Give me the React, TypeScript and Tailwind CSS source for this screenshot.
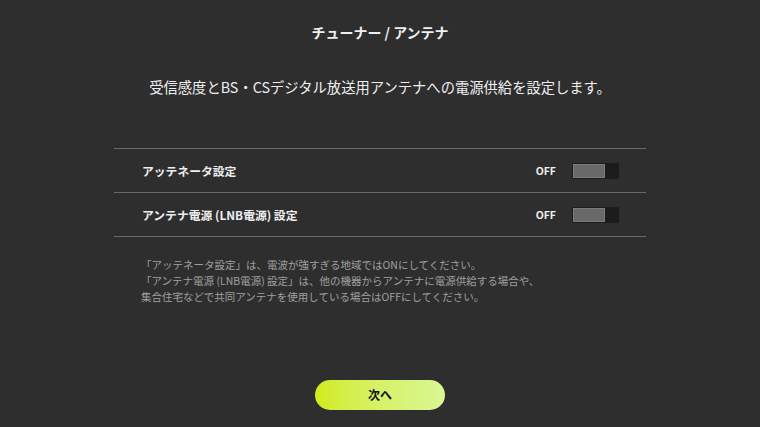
const font = "font-['Noto_Sans_CJK_JP','Noto_Sans',sans-serif]";

const rows = ['アッテネータ設定', 'アンテナ電源 (LNB電源) 設定'];

const Toggle = () => (
  <div className="flex h-[16px] w-[47px] items-stretch rounded-[1px] bg-[#1c1c1c] p-px">
    <div className="w-[32px] border border-[#7c7c7c] bg-[#696969]" />
  </div>
);

export default function App() {
  return (
    <div className={`flex h-[427px] w-[760px] flex-col items-center bg-[#2e2e2e] text-[#efefef] ${font}`}>
      <h1 className="mt-[22px] text-[14px] font-bold leading-[20px]">チューナー / アンテナ</h1>
      <p className="mt-[34px] text-[14.3px] leading-[22px]">受信感度とBS・CSデジタル放送用アンテナへの電源供給を設定します。</p>

      <div className="mt-[50px] w-[532px] border-t border-[#6a6a6a]">
        {rows.map((label) => (
          <div key={label} className="flex h-[44px] items-center border-b border-[#6a6a6a] pl-[28px] pr-[27px]">
            <span className="flex-1 text-[11.8px] font-bold">{label}</span>
            <span className="mr-[16px] text-[10.5px] font-bold">OFF</span>
            <Toggle />
          </div>
        ))}
      </div>

      <div className="mt-[20px] w-[532px] pl-[27px] text-[10.5px] leading-[16px] text-[#a0a0a0]">
        <p>「アッテネータ設定」は、電波が強すぎる地域ではONにしてください。</p>
        <p>「アンテナ電源 (LNB電源) 設定」は、他の機器からアンテナに電源供給する場合や、</p>
        <p>集合住宅などで共同アンテナを使用している場合はOFFにしてください。</p>
      </div>

      <button className="mt-auto mb-[17px] h-[30px] w-[130px] rounded-full bg-gradient-to-r from-[#d2eb12] to-[#daf794] text-[12px] font-bold text-[#111]">
        次へ
      </button>
    </div>
  );
}
